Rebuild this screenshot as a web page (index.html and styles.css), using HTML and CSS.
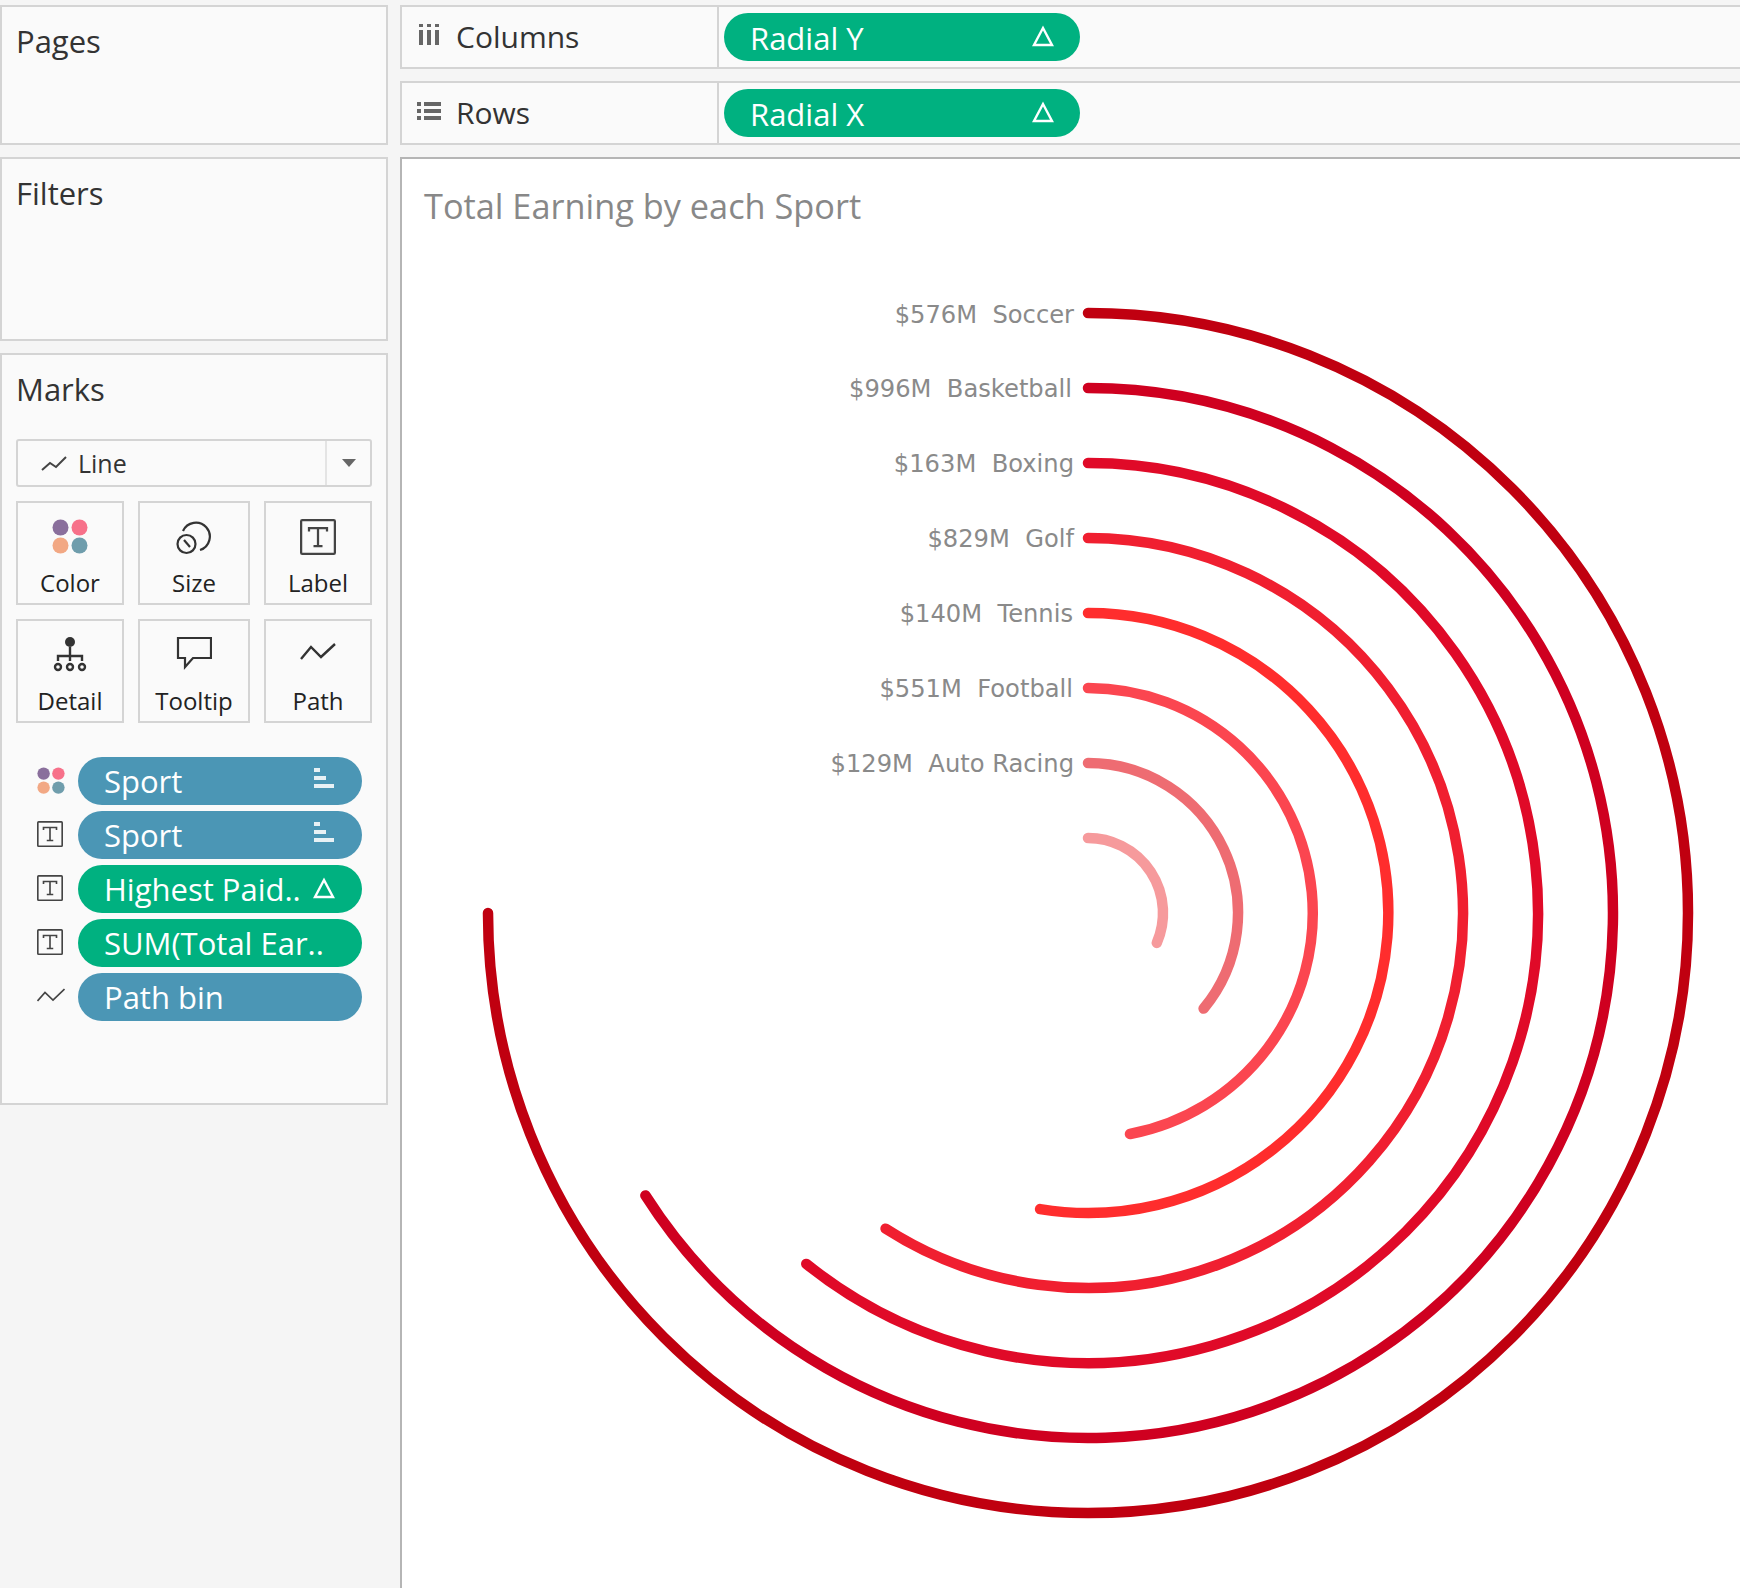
FILE: index.html
```html
<!DOCTYPE html>
<html lang="en">

<head>
    <meta charset="UTF-8">
    <title>Total Earning by each Sport</title>
    <link rel="stylesheet" href="styles.css">
</head>

<body>

    <svg class="sprites" width="0" height="0">
        <symbol id="dots" viewBox="0 0 36 36">
            <circle cx="8.5" cy="8.5" r="8" fill="#8a6f9c" />
            <circle cx="27.5" cy="8.5" r="8" fill="#f7718a" />
            <circle cx="8.5" cy="26.5" r="8" fill="#f2a884" />
            <circle cx="27.5" cy="26.5" r="8" fill="#6f9dac" />
        </symbol>
        <symbol id="label" viewBox="0 0 32 32">
            <rect x="1" y="1" width="30" height="30" rx="1" fill="none" stroke="#444" stroke-width="2" />
            <path d="M8 11V8h16v3M16 8v16M12 24h8" fill="none" stroke="#444" stroke-width="2" />
        </symbol>
        <symbol id="path" viewBox="0 0 28 14">
            <path d="M.5 13L8 4.5l8 7.5L27.5 1" fill="none" stroke="#444" stroke-width="1.7" />
        </symbol>
        <symbol id="delta" viewBox="0 0 22 22">
            <path d="M11 3L20 20H2z" fill="none" stroke="#fff" stroke-width="2.4" />
        </symbol>
        <symbol id="sort" viewBox="0 0 20 20">
            <path d="M0 0h6v4H0zM0 8h12v4H0zM0 16h20v4H0z" fill="#e8f1f5" />
        </symbol>
    </svg>

    <div class="app">
        <div class="sidebar">
            <div class="panel panel_pages"><div class="panel_title">Pages</div></div>
            <div class="panel panel_filters"><div class="panel_title">Filters</div></div>
            <div class="panel panel_marks">
                <div class="panel_title">Marks</div>

                <div class="mark_select">
                    <div class="mark_select_name">
                        <svg class="line_icon" viewBox="0 0 26 18"><path d="M1 16l8-7 6 4L25 3" fill="none" stroke="#444" stroke-width="2" /></svg>
                        <span>Line</span>
                    </div>
                    <div class="mark_select_arrow"><i></i></div>
                </div>

                <div class="mark_buttons">
                    <div class="mark_btn">
                        <svg class="mark_icon"><use href="#dots" /></svg>
                        <span>Color</span>
                    </div>
                    <div class="mark_btn">
                        <svg class="mark_icon" viewBox="0 0 36 36">
                            <path d="M7 12A14 14 0 1 1 24 31" fill="none" stroke="#333" stroke-width="2.2" />
                            <circle cx="10.5" cy="25" r="9" fill="none" stroke="#333" stroke-width="2.2" />
                            <path d="M8 21l6 7" stroke="#333" stroke-width="2.2" />
                        </svg>
                        <span>Size</span>
                    </div>
                    <div class="mark_btn">
                        <svg class="mark_icon"><use href="#label" /></svg>
                        <span>Label</span>
                    </div>
                    <div class="mark_btn">
                        <svg class="mark_icon" viewBox="0 0 36 36">
                            <circle cx="18" cy="5" r="5" fill="#333" />
                            <path d="M18 10v14M6 24v-5h24v5" fill="none" stroke="#333" stroke-width="2.4" />
                            <circle cx="6" cy="30" r="3" fill="none" stroke="#333" stroke-width="2.4" />
                            <circle cx="18" cy="30" r="3" fill="none" stroke="#333" stroke-width="2.4" />
                            <circle cx="30" cy="30" r="3" fill="none" stroke="#333" stroke-width="2.4" />
                        </svg>
                        <span>Detail</span>
                    </div>
                    <div class="mark_btn">
                        <svg class="mark_icon" viewBox="0 0 36 36">
                            <path d="M2 1h33v20H17l-8 9v-9H2z" fill="none" stroke="#333" stroke-width="2.2" />
                        </svg>
                        <span>Tooltip</span>
                    </div>
                    <div class="mark_btn">
                        <svg class="mark_icon" viewBox="0 0 36 36">
                            <path d="M1 22L11 10l10 10L35 7" fill="none" stroke="#333" stroke-width="2.4" />
                        </svg>
                        <span>Path</span>
                    </div>
                </div>

                <div class="card_list">
                    <div class="card_row">
                        <svg class="card_icon"><use href="#dots" /></svg>
                        <div class="pill pill_blue"><span>Sport</span><svg class="pill_sort"><use href="#sort" /></svg></div>
                    </div>
                    <div class="card_row">
                        <svg class="card_icon card_icon_t"><use href="#label" /></svg>
                        <div class="pill pill_blue"><span>Sport</span><svg class="pill_sort"><use href="#sort" /></svg></div>
                    </div>
                    <div class="card_row">
                        <svg class="card_icon card_icon_t"><use href="#label" /></svg>
                        <div class="pill pill_green"><span>Highest Paid..</span><svg class="pill_delta"><use href="#delta" /></svg></div>
                    </div>
                    <div class="card_row">
                        <svg class="card_icon card_icon_t"><use href="#label" /></svg>
                        <div class="pill pill_green"><span>SUM(Total Ear..</span></div>
                    </div>
                    <div class="card_row">
                        <svg class="card_icon card_icon_p"><use href="#path" /></svg>
                        <div class="pill pill_blue"><span>Path bin</span></div>
                    </div>
                </div>
            </div>
        </div>

        <div class="main">
            <div class="shelf">
                <div class="shelf_name">
                    <svg class="shelf_icon" viewBox="0 0 24 24"><path d="M2 1h4v3H2zM10 1h4v3h-4zM18 1h4v3h-4zM2 7h4v15H2zM10 7h4v15h-4zM18 7h4v15h-4z" fill="#666" /></svg>
                    <span>Columns</span>
                </div>
                <div class="shelf_body">
                    <div class="pill pill_green pill_shelf"><span>Radial Y</span><svg class="pill_delta"><use href="#delta" /></svg></div>
                </div>
            </div>
            <div class="shelf">
                <div class="shelf_name">
                    <svg class="shelf_icon" viewBox="0 0 24 24"><path d="M0 3h4v4H0zM7 3h17v4H7zM0 10h4v4H0zM7 10h17v4H7zM0 17h4v4H0zM7 17h17v4H7z" fill="#666" /></svg>
                    <span>Rows</span>
                </div>
                <div class="shelf_body">
                    <div class="pill pill_green pill_shelf"><span>Radial X</span><svg class="pill_delta"><use href="#delta" /></svg></div>
                </div>
            </div>

            <div class="view">
                <div class="view_title">Total Earning by each Sport</div>
                <svg class="chart" viewBox="0 0 1338 1429" width="1338" height="1429">
                    <g fill="none" stroke-width="10.5" stroke-linecap="round">
                        <path stroke="#c00010" d="M686 154A600 600 0 1 1 86 754" />
                        <path stroke="#cf0020" d="M686 229A525 525 0 1 1 243.4 1036.4" />
                        <path stroke="#e00a28" d="M686 304A450 450 0 1 1 404.3 1104.9" />
                        <path stroke="#f01f30" d="M686 379A375 375 0 1 1 483.6 1069.7" />
                        <path stroke="#ff2d2d" d="M686 454A300 300 0 1 1 638.1 1050.1" />
                        <path stroke="#fb4650" d="M686 529A225 225 0 0 1 728 975" />
                        <path stroke="#ee6c72" d="M686 604A150 150 0 0 1 801.6 849.6" />
                        <path stroke="#f69a9c" d="M686 679A75 75 0 0 1 754.8 783.9" />
                    </g>
                    <g class="chart_labels">
                        <text x="672" y="164">$576M&#160;&#160;Soccer</text>
                        <text x="670" y="238">$996M&#160;&#160;Basketball</text>
                        <text x="672" y="313">$163M&#160;&#160;Boxing</text>
                        <text x="672" y="388">$829M&#160;&#160;Golf</text>
                        <text x="671" y="463">$140M&#160;&#160;Tennis</text>
                        <text x="671" y="538">$551M&#160;&#160;Football</text>
                        <text x="672" y="613">$129M&#160;&#160;Auto Racing</text>
                    </g>
                </svg>
            </div>
        </div>
    </div>

</body>

</html>
```

FILE: styles.css
```css
* {
    margin: 0;
    padding: 0;
    box-sizing: border-box;
}

html,
body {
    height: 100%;
    overflow: hidden;
}

body {
    background-color: #f5f5f5;
    font-family: 'Open Sans', sans-serif;
    color: #333;
}

.sprites {
    position: absolute;
}

.app {
    display: flex;
    gap: 12px;
    height: 1588px;
    padding-top: 5px;
}

/* left side */
.sidebar {
    width: 388px;
    flex-shrink: 0;
    display: flex;
    flex-direction: column;
    gap: 12px;
}

.panel {
    background-color: #fafafa;
    border: 2px solid #d4d4d4;
    padding: 0 14px;
}

.panel_pages {
    height: 140px;
}

.panel_filters {
    height: 184px;
}

.panel_marks {
    height: 752px;
}

.panel_title {
    font-size: 31px;
    line-height: 36px;
    padding-top: 16px;
}

.mark_select {
    display: flex;
    height: 48px;
    margin-top: 32px;
    border: 2px solid #d4d4d4;
    border-radius: 3px;
}

.mark_select_name {
    flex: 1;
    display: flex;
    align-items: center;
    gap: 11px;
    padding-left: 23px;
    font-size: 25px;
    border-right: 2px solid #e4e4e4;
}

.line_icon {
    width: 26px;
    height: 18px;
}

.mark_select_arrow {
    width: 43px;
    display: flex;
    align-items: center;
    justify-content: center;
}

.mark_select_arrow i {
    border-left: 7px solid transparent;
    border-right: 7px solid transparent;
    border-top: 8px solid #666;
}

.mark_buttons {
    display: grid;
    grid-template-columns: 108px 112px 108px;
    grid-auto-rows: 104px;
    column-gap: 14px;
    row-gap: 14px;
    margin-top: 14px;
}

.mark_btn {
    border: 2px solid #d4d4d4;
    display: flex;
    flex-direction: column;
    align-items: center;
    padding-top: 16px;
    font-size: 24px;
    color: #222;
}

.mark_icon {
    width: 36px;
    height: 36px;
}

.mark_btn span {
    margin-top: 13px;
    line-height: 30px;
}

.card_list {
    display: flex;
    flex-direction: column;
    gap: 6px;
    margin-top: 34px;
}

.card_row {
    display: flex;
    align-items: center;
}

.card_icon {
    width: 28px;
    height: 28px;
    margin-left: 21px;
    margin-right: 13px;
    flex-shrink: 0;
}

.card_icon_t {
    width: 26px;
    height: 26px;
    margin-right: 15px;
    margin-top: -2px;
}

.card_icon_p {
    height: 14px;
    margin-top: -4px;
}

/* pills */
.pill {
    display: flex;
    align-items: center;
    justify-content: space-between;
    width: 284px;
    height: 48px;
    border-radius: 24px;
    padding: 0 27px 0 26px;
    color: #fff;
    font-size: 31px;
    white-space: nowrap;
}

.pill_blue {
    background-color: #4b96b5;
}

.pill_green {
    background-color: #00b180;
}

.pill_shelf {
    width: 356px;
    padding-right: 26px;
}

.pill_shelf span {
    padding-top: 2px;
}

.pill_sort {
    width: 20px;
    height: 20px;
    margin-top: -6px;
    margin-right: 1px;
}

.pill_delta {
    width: 22px;
    height: 22px;
    margin-top: -3px;
    flex-shrink: 0;
}

/* right side */
.main {
    flex: 1;
    display: flex;
    flex-direction: column;
    gap: 12px;
    min-width: 0;
}

.shelf {
    display: flex;
    height: 64px;
    background-color: #fafafa;
    border: 2px solid #d4d4d4;
    border-right: none;
}

.shelf_name {
    width: 317px;
    display: flex;
    align-items: center;
    gap: 15px;
    padding-left: 15px;
    font-size: 30px;
    border-right: 2px solid #d4d4d4;
}

.shelf_name span {
    margin-top: -2px;
}

.shelf_icon {
    width: 24px;
    height: 24px;
    margin-top: -4px;
}

.shelf_body {
    padding: 6px 0 0 5px;
}

.view {
    position: relative;
    flex: 1;
    background-color: #fff;
    border-top: 2px solid #b5b5b5;
    border-left: 2px solid #b5b5b5;
}

.view_title {
    position: relative;
    padding: 27px 0 0 22px;
    font-size: 34.3px;
    line-height: 40px;
    color: #888;
}

.chart {
    position: absolute;
    left: 0;
    top: 0;
}

.chart_labels text {
    font-family: 'DejaVu Sans', sans-serif;
    font-size: 24.2px;
    fill: #8a8a8a;
    text-anchor: end;
}
```
